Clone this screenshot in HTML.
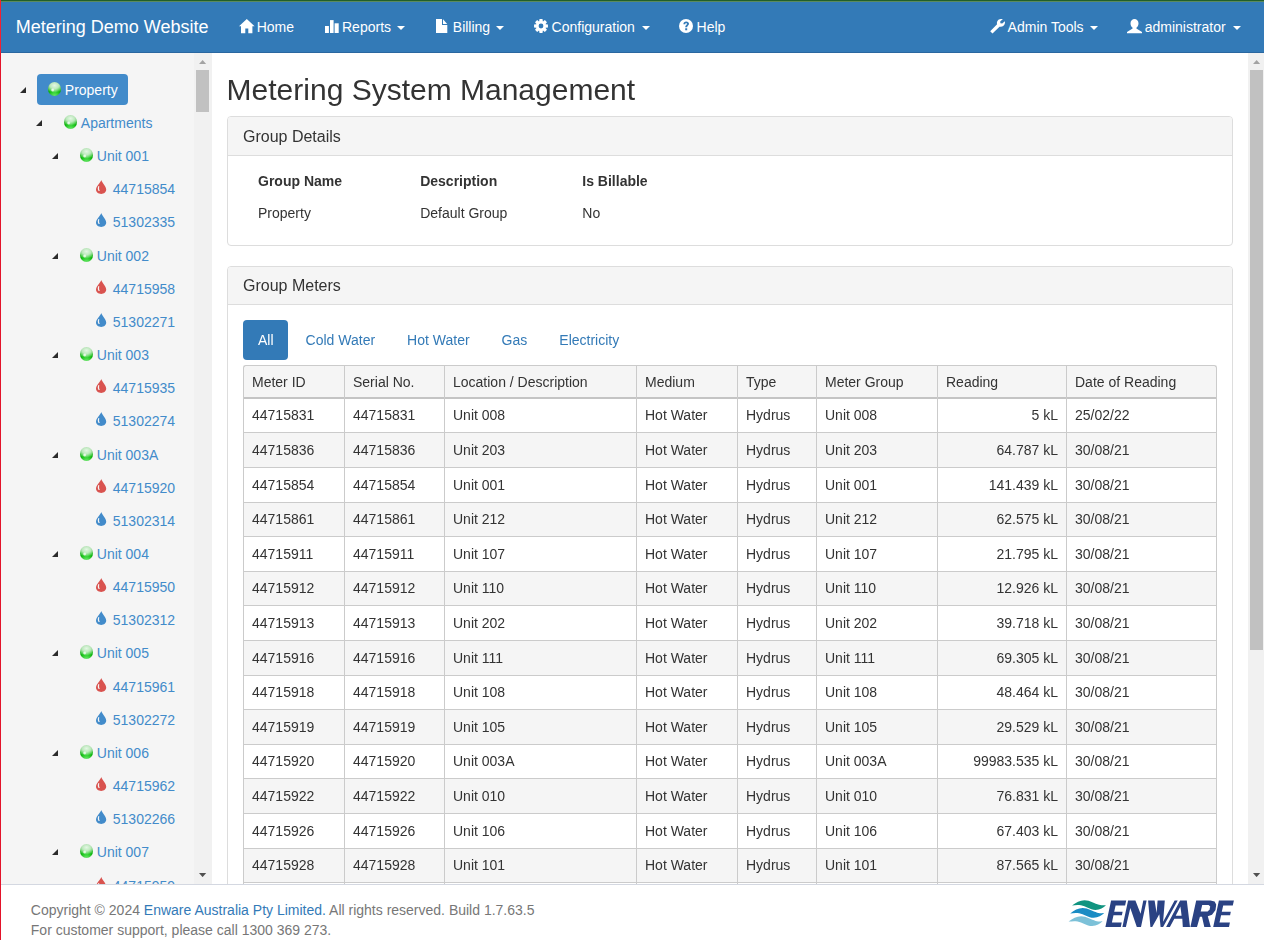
<!DOCTYPE html><html><head><meta charset="utf-8"><title>Metering Demo Website</title><style>

*{box-sizing:border-box;margin:0;padding:0}
html,body{width:1264px;height:940px;overflow:hidden;background:#fff}
body{position:relative;font-family:"Liberation Sans", sans-serif;font-size:14px;line-height:20px;color:#333}
.a{position:absolute;white-space:nowrap}
.nav{position:absolute;left:0;top:0;width:1264px;height:53px;background:#337ab7;border-bottom:1px solid #2a67a0}
.nt{position:absolute;color:#fff;font-size:14px;line-height:20px;top:17px;white-space:nowrap}
.ic{position:absolute;top:18px}
.caret{position:absolute;top:26px;width:0;height:0;border-top:4px solid #fff;border-left:4px solid transparent;border-right:4px solid transparent}
.side{position:absolute;left:0;top:53px;width:212px;height:831px;background:#f5f5f5;overflow:hidden}
.tl{position:absolute;color:#428bca;font-size:14px;line-height:20px;white-space:nowrap}
.tri{position:absolute;width:0;height:0;border-bottom:6px solid #2b2b2b;border-left:6px solid transparent}
.sph{position:absolute;width:13px;height:13.6px;border-radius:50%;background:radial-gradient(circle at 36% 57%,rgba(255,255,255,.95) 0,rgba(255,255,255,.6) 9%,rgba(255,255,255,0) 17%),radial-gradient(ellipse 78% 52% at 50% 24%,rgba(240,250,240,.95) 0,rgba(215,240,215,.85) 45%,rgba(200,235,200,0) 100%),radial-gradient(ellipse 60% 30% at 50% 95%,rgba(110,235,110,.9) 0,rgba(110,235,110,0) 100%),radial-gradient(circle at 50% 55%,#55dd55 0,#12c412 40%,#06a006 75%,#0a820a 100%)}
.drop{position:absolute;width:11px;height:14px}
.sb{position:absolute;background:#f1f1f1}
.thumb{position:absolute;background:#c1c1c1}
.main{position:absolute;left:212px;top:53px;width:1036px;height:831px;overflow:hidden;background:#fff;will-change:transform}
.panel{position:absolute;border:1px solid #ddd;border-radius:4px;background:#fff}
.ph{position:absolute;left:0;top:0;right:0;height:39px;background:#f5f5f5;border-bottom:1px solid #ddd;border-radius:3px 3px 0 0}
.foot{position:absolute;left:0;top:884px;width:1264px;height:56px;background:#fff;border-top:1px solid #d4d8e1}
.td{position:absolute;white-space:nowrap;font-size:14px;line-height:20px;color:#333}

</style></head><body>
<div class="nav">
<div class="a" style="left:0;top:0;width:1264px;height:1px;background:#215f2a"></div>
<div class="a" style="left:0;top:1px;width:1264px;height:1px;background:#5a8a5e"></div>
<div class="nt" style="left:15.8px;top:17px;font-size:18px;line-height:20px">Metering Demo Website</div>
<svg class="a" style="left:238.8px;top:18.7px" width="16" height="15" viewBox="0 0 16 15"><path d="M7.8 0 L15.6 7.2 L13.4 7.2 L13.4 14.3 L9.3 14.3 L9.3 9.5 L6.3 9.5 L6.3 14.3 L2 14.3 L2 7.2 L0 7.2 Z" fill="#fff"/></svg>
<div class="nt" style="left:256.7px">Home</div>
<svg class="a" style="left:325px;top:18.9px" width="14" height="14" viewBox="0 0 14 14"><rect x="0" y="7" width="3.9" height="7" fill="#fff"/><rect x="5" y="1.1" width="3.6" height="12.9" fill="#fff"/><rect x="9.6" y="4.3" width="4.1" height="9.7" fill="#fff"/></svg>
<div class="nt" style="left:342px">Reports</div>
<div class="caret" style="left:397px"></div>
<svg class="a" style="left:435.7px;top:18.9px" width="12" height="15" viewBox="0 0 12 15"><path d="M0 0 L6.0 0 L6.0 5.9 L11.3 5.9 L11.3 14.1 L0 14.1 Z" fill="#fff"/><path d="M7.0 0.2 L11.2 4.9 L7.0 4.9 Z" fill="#fff"/></svg>
<div class="nt" style="left:452.8px">Billing</div>
<div class="caret" style="left:496px"></div>
<svg class="a" style="left:534px;top:18.9px" width="14" height="14" viewBox="0 0 14 14"><path fill-rule="evenodd" fill="#fff" d="M5.52,0.06 L8.48,0.06 L8.85,2.36 L8.97,2.40 L10.86,1.04 L12.96,3.14 L11.59,5.03 L11.64,5.14 L13.94,5.52 L13.94,8.48 L11.64,8.85 L11.60,8.97 L12.96,10.86 L10.86,12.96 L8.97,11.59 L8.86,11.64 L8.48,13.94 L5.52,13.94 L5.15,11.64 L5.03,11.60 L3.14,12.96 L1.04,10.86 L2.41,8.97 L2.36,8.86 L0.06,8.48 L0.06,5.52 L2.36,5.15 L2.40,5.03 L1.04,3.14 L3.14,1.04 L5.03,2.41 L5.14,2.36 Z M9.4,7 A2.4 2.4 0 1 0 4.6,7 A2.4 2.4 0 1 0 9.4,7 Z"/></svg>
<div class="nt" style="left:551.6px">Configuration</div>
<div class="caret" style="left:641.5px"></div>
<svg class="a" style="left:679.1px;top:18.9px" width="14" height="14" viewBox="0 0 14 14"><circle cx="7" cy="7" r="7" fill="#fff"/><path d="M4.4 5.2 C4.4 3.4 5.6 2.4 7.2 2.4 C8.9 2.4 10 3.4 10 4.8 C10 6.3 8.2 6.8 8.2 8.2 L6.2 8.2 C6.2 6.3 7.9 5.8 7.9 4.9 C7.9 4.4 7.6 4.1 7.1 4.1 C6.6 4.1 6.3 4.5 6.3 5.2 Z M6.2 9.2 L8.2 9.2 L8.2 11.2 L6.2 11.2 Z" fill="#337ab7"/></svg>
<div class="nt" style="left:696.6px">Help</div>
<svg class="a" style="left:990px;top:18.7px" width="15" height="15" viewBox="0 0 15 15"><path d="M0.2 12.3 L7.1 5.3 C6.6 3.9 7.0 2.1 8.2 1.0 C9.3 0.1 11.0 -0.1 12.9 0.1 L10.2 2.6 L10.4 4.3 L12.2 4.6 L14.9 2.3 C15.2 4.0 14.7 5.7 13.5 6.8 C12.4 7.8 10.8 8.1 9.5 7.7 L2.5 14.6 Z" fill="#fff"/></svg>
<div class="nt" style="left:1007.6px">Admin Tools</div>
<div class="caret" style="left:1089.5px"></div>
<svg class="a" style="left:1127px;top:18.7px" width="15" height="15" viewBox="0 0 15 15"><path d="M7.5 0 C9.6 0 11.5 1.6 11.5 4.3 C11.5 6.4 10.6 8 9.4 8.8 L9.4 9.4 L15 13 L15 14.3 L0 14.3 L0 13 L5.6 9.4 L5.6 8.8 C4.4 8 3.5 6.4 3.5 4.3 C3.5 1.6 5.4 0 7.5 0 Z" fill="#fff"/></svg>
<div class="nt" style="left:1144.7px">administrator</div>
<div class="caret" style="left:1232.5px"></div>
</div>
<div class="side">
<div class="a" style="left:37px;top:21px;width:91px;height:31px;background:#428bca;border-radius:4px"></div>
<div class="tri" style="left:20px;top:34px"></div>
<div class="sph" style="left:47.6px;top:29.2px"></div>
<div class="tl" style="left:64.8px;top:27px;color:#fff">Property</div>
<div class="tri" style="left:36px;top:67px"></div>
<div class="sph" style="left:63.6px;top:62.2px"></div>
<div class="tl" style="left:80.8px;top:60px;color:#428bca">Apartments</div>
<div class="tri" style="left:52px;top:100px"></div>
<div class="sph" style="left:79.6px;top:95.2px"></div>
<div class="tl" style="left:96.8px;top:93px;color:#428bca">Unit 001</div>
<div class="a" style="left:95.9px;top:127.3px;width:11px;height:14px"><svg class="drop" viewBox="0 0 11 14" width="11" height="14"><path d="M5.3 0 C5.8 2.3 10.2 6.2 10.2 9.6 C10.2 12.2 8.0 14 5.2 14 C2.3 14 0 12.2 0 9.6 C0 6.2 4.7 2.3 5.3 0 Z" fill="#d9534f"/><path d="M2.4 6.0 C1.6 7.5 1.5 9.5 2.6 11.0 C3.0 11.1 3.5 11.0 3.8 10.8 C3.0 9.8 2.9 7.6 3.3 6.2 Z" fill="#f5f5f5"/></svg></div>
<div class="tl" style="left:112.8px;top:126px;color:#428bca">44715854</div>
<div class="a" style="left:95.9px;top:160.3px;width:11px;height:14px"><svg class="drop" viewBox="0 0 11 14" width="11" height="14"><path d="M5.3 0 C5.8 2.3 10.2 6.2 10.2 9.6 C10.2 12.2 8.0 14 5.2 14 C2.3 14 0 12.2 0 9.6 C0 6.2 4.7 2.3 5.3 0 Z" fill="#428bca"/><path d="M2.4 6.0 C1.6 7.5 1.5 9.5 2.6 11.0 C3.0 11.1 3.5 11.0 3.8 10.8 C3.0 9.8 2.9 7.6 3.3 6.2 Z" fill="#f5f5f5"/></svg></div>
<div class="tl" style="left:112.8px;top:159px;color:#428bca">51302335</div>
<div class="tri" style="left:52px;top:200px"></div>
<div class="sph" style="left:79.6px;top:195.2px"></div>
<div class="tl" style="left:96.8px;top:193px;color:#428bca">Unit 002</div>
<div class="a" style="left:95.9px;top:227.3px;width:11px;height:14px"><svg class="drop" viewBox="0 0 11 14" width="11" height="14"><path d="M5.3 0 C5.8 2.3 10.2 6.2 10.2 9.6 C10.2 12.2 8.0 14 5.2 14 C2.3 14 0 12.2 0 9.6 C0 6.2 4.7 2.3 5.3 0 Z" fill="#d9534f"/><path d="M2.4 6.0 C1.6 7.5 1.5 9.5 2.6 11.0 C3.0 11.1 3.5 11.0 3.8 10.8 C3.0 9.8 2.9 7.6 3.3 6.2 Z" fill="#f5f5f5"/></svg></div>
<div class="tl" style="left:112.8px;top:226px;color:#428bca">44715958</div>
<div class="a" style="left:95.9px;top:260.3px;width:11px;height:14px"><svg class="drop" viewBox="0 0 11 14" width="11" height="14"><path d="M5.3 0 C5.8 2.3 10.2 6.2 10.2 9.6 C10.2 12.2 8.0 14 5.2 14 C2.3 14 0 12.2 0 9.6 C0 6.2 4.7 2.3 5.3 0 Z" fill="#428bca"/><path d="M2.4 6.0 C1.6 7.5 1.5 9.5 2.6 11.0 C3.0 11.1 3.5 11.0 3.8 10.8 C3.0 9.8 2.9 7.6 3.3 6.2 Z" fill="#f5f5f5"/></svg></div>
<div class="tl" style="left:112.8px;top:259px;color:#428bca">51302271</div>
<div class="tri" style="left:52px;top:299px"></div>
<div class="sph" style="left:79.6px;top:294.2px"></div>
<div class="tl" style="left:96.8px;top:292px;color:#428bca">Unit 003</div>
<div class="a" style="left:95.9px;top:326.3px;width:11px;height:14px"><svg class="drop" viewBox="0 0 11 14" width="11" height="14"><path d="M5.3 0 C5.8 2.3 10.2 6.2 10.2 9.6 C10.2 12.2 8.0 14 5.2 14 C2.3 14 0 12.2 0 9.6 C0 6.2 4.7 2.3 5.3 0 Z" fill="#d9534f"/><path d="M2.4 6.0 C1.6 7.5 1.5 9.5 2.6 11.0 C3.0 11.1 3.5 11.0 3.8 10.8 C3.0 9.8 2.9 7.6 3.3 6.2 Z" fill="#f5f5f5"/></svg></div>
<div class="tl" style="left:112.8px;top:325px;color:#428bca">44715935</div>
<div class="a" style="left:95.9px;top:359.3px;width:11px;height:14px"><svg class="drop" viewBox="0 0 11 14" width="11" height="14"><path d="M5.3 0 C5.8 2.3 10.2 6.2 10.2 9.6 C10.2 12.2 8.0 14 5.2 14 C2.3 14 0 12.2 0 9.6 C0 6.2 4.7 2.3 5.3 0 Z" fill="#428bca"/><path d="M2.4 6.0 C1.6 7.5 1.5 9.5 2.6 11.0 C3.0 11.1 3.5 11.0 3.8 10.8 C3.0 9.8 2.9 7.6 3.3 6.2 Z" fill="#f5f5f5"/></svg></div>
<div class="tl" style="left:112.8px;top:358px;color:#428bca">51302274</div>
<div class="tri" style="left:52px;top:399px"></div>
<div class="sph" style="left:79.6px;top:394.2px"></div>
<div class="tl" style="left:96.8px;top:392px;color:#428bca">Unit 003A</div>
<div class="a" style="left:95.9px;top:426.3px;width:11px;height:14px"><svg class="drop" viewBox="0 0 11 14" width="11" height="14"><path d="M5.3 0 C5.8 2.3 10.2 6.2 10.2 9.6 C10.2 12.2 8.0 14 5.2 14 C2.3 14 0 12.2 0 9.6 C0 6.2 4.7 2.3 5.3 0 Z" fill="#d9534f"/><path d="M2.4 6.0 C1.6 7.5 1.5 9.5 2.6 11.0 C3.0 11.1 3.5 11.0 3.8 10.8 C3.0 9.8 2.9 7.6 3.3 6.2 Z" fill="#f5f5f5"/></svg></div>
<div class="tl" style="left:112.8px;top:425px;color:#428bca">44715920</div>
<div class="a" style="left:95.9px;top:459.3px;width:11px;height:14px"><svg class="drop" viewBox="0 0 11 14" width="11" height="14"><path d="M5.3 0 C5.8 2.3 10.2 6.2 10.2 9.6 C10.2 12.2 8.0 14 5.2 14 C2.3 14 0 12.2 0 9.6 C0 6.2 4.7 2.3 5.3 0 Z" fill="#428bca"/><path d="M2.4 6.0 C1.6 7.5 1.5 9.5 2.6 11.0 C3.0 11.1 3.5 11.0 3.8 10.8 C3.0 9.8 2.9 7.6 3.3 6.2 Z" fill="#f5f5f5"/></svg></div>
<div class="tl" style="left:112.8px;top:458px;color:#428bca">51302314</div>
<div class="tri" style="left:52px;top:498px"></div>
<div class="sph" style="left:79.6px;top:493.2px"></div>
<div class="tl" style="left:96.8px;top:491px;color:#428bca">Unit 004</div>
<div class="a" style="left:95.9px;top:525.3px;width:11px;height:14px"><svg class="drop" viewBox="0 0 11 14" width="11" height="14"><path d="M5.3 0 C5.8 2.3 10.2 6.2 10.2 9.6 C10.2 12.2 8.0 14 5.2 14 C2.3 14 0 12.2 0 9.6 C0 6.2 4.7 2.3 5.3 0 Z" fill="#d9534f"/><path d="M2.4 6.0 C1.6 7.5 1.5 9.5 2.6 11.0 C3.0 11.1 3.5 11.0 3.8 10.8 C3.0 9.8 2.9 7.6 3.3 6.2 Z" fill="#f5f5f5"/></svg></div>
<div class="tl" style="left:112.8px;top:524px;color:#428bca">44715950</div>
<div class="a" style="left:95.9px;top:558.3px;width:11px;height:14px"><svg class="drop" viewBox="0 0 11 14" width="11" height="14"><path d="M5.3 0 C5.8 2.3 10.2 6.2 10.2 9.6 C10.2 12.2 8.0 14 5.2 14 C2.3 14 0 12.2 0 9.6 C0 6.2 4.7 2.3 5.3 0 Z" fill="#428bca"/><path d="M2.4 6.0 C1.6 7.5 1.5 9.5 2.6 11.0 C3.0 11.1 3.5 11.0 3.8 10.8 C3.0 9.8 2.9 7.6 3.3 6.2 Z" fill="#f5f5f5"/></svg></div>
<div class="tl" style="left:112.8px;top:557px;color:#428bca">51302312</div>
<div class="tri" style="left:52px;top:597px"></div>
<div class="sph" style="left:79.6px;top:592.2px"></div>
<div class="tl" style="left:96.8px;top:590px;color:#428bca">Unit 005</div>
<div class="a" style="left:95.9px;top:625.3px;width:11px;height:14px"><svg class="drop" viewBox="0 0 11 14" width="11" height="14"><path d="M5.3 0 C5.8 2.3 10.2 6.2 10.2 9.6 C10.2 12.2 8.0 14 5.2 14 C2.3 14 0 12.2 0 9.6 C0 6.2 4.7 2.3 5.3 0 Z" fill="#d9534f"/><path d="M2.4 6.0 C1.6 7.5 1.5 9.5 2.6 11.0 C3.0 11.1 3.5 11.0 3.8 10.8 C3.0 9.8 2.9 7.6 3.3 6.2 Z" fill="#f5f5f5"/></svg></div>
<div class="tl" style="left:112.8px;top:624px;color:#428bca">44715961</div>
<div class="a" style="left:95.9px;top:658.3px;width:11px;height:14px"><svg class="drop" viewBox="0 0 11 14" width="11" height="14"><path d="M5.3 0 C5.8 2.3 10.2 6.2 10.2 9.6 C10.2 12.2 8.0 14 5.2 14 C2.3 14 0 12.2 0 9.6 C0 6.2 4.7 2.3 5.3 0 Z" fill="#428bca"/><path d="M2.4 6.0 C1.6 7.5 1.5 9.5 2.6 11.0 C3.0 11.1 3.5 11.0 3.8 10.8 C3.0 9.8 2.9 7.6 3.3 6.2 Z" fill="#f5f5f5"/></svg></div>
<div class="tl" style="left:112.8px;top:657px;color:#428bca">51302272</div>
<div class="tri" style="left:52px;top:697px"></div>
<div class="sph" style="left:79.6px;top:692.2px"></div>
<div class="tl" style="left:96.8px;top:690px;color:#428bca">Unit 006</div>
<div class="a" style="left:95.9px;top:724.3px;width:11px;height:14px"><svg class="drop" viewBox="0 0 11 14" width="11" height="14"><path d="M5.3 0 C5.8 2.3 10.2 6.2 10.2 9.6 C10.2 12.2 8.0 14 5.2 14 C2.3 14 0 12.2 0 9.6 C0 6.2 4.7 2.3 5.3 0 Z" fill="#d9534f"/><path d="M2.4 6.0 C1.6 7.5 1.5 9.5 2.6 11.0 C3.0 11.1 3.5 11.0 3.8 10.8 C3.0 9.8 2.9 7.6 3.3 6.2 Z" fill="#f5f5f5"/></svg></div>
<div class="tl" style="left:112.8px;top:723px;color:#428bca">44715962</div>
<div class="a" style="left:95.9px;top:757.3px;width:11px;height:14px"><svg class="drop" viewBox="0 0 11 14" width="11" height="14"><path d="M5.3 0 C5.8 2.3 10.2 6.2 10.2 9.6 C10.2 12.2 8.0 14 5.2 14 C2.3 14 0 12.2 0 9.6 C0 6.2 4.7 2.3 5.3 0 Z" fill="#428bca"/><path d="M2.4 6.0 C1.6 7.5 1.5 9.5 2.6 11.0 C3.0 11.1 3.5 11.0 3.8 10.8 C3.0 9.8 2.9 7.6 3.3 6.2 Z" fill="#f5f5f5"/></svg></div>
<div class="tl" style="left:112.8px;top:756px;color:#428bca">51302266</div>
<div class="tri" style="left:52px;top:796px"></div>
<div class="sph" style="left:79.6px;top:791.2px"></div>
<div class="tl" style="left:96.8px;top:789px;color:#428bca">Unit 007</div>
<div class="a" style="left:95.9px;top:824.3px;width:11px;height:14px"><svg class="drop" viewBox="0 0 11 14" width="11" height="14"><path d="M5.3 0 C5.8 2.3 10.2 6.2 10.2 9.6 C10.2 12.2 8.0 14 5.2 14 C2.3 14 0 12.2 0 9.6 C0 6.2 4.7 2.3 5.3 0 Z" fill="#d9534f"/><path d="M2.4 6.0 C1.6 7.5 1.5 9.5 2.6 11.0 C3.0 11.1 3.5 11.0 3.8 10.8 C3.0 9.8 2.9 7.6 3.3 6.2 Z" fill="#f5f5f5"/></svg></div>
<div class="tl" style="left:112.8px;top:823px;color:#428bca">44715959</div>
<div class="a" style="left:95.9px;top:857.3px;width:11px;height:14px"><svg class="drop" viewBox="0 0 11 14" width="11" height="14"><path d="M5.3 0 C5.8 2.3 10.2 6.2 10.2 9.6 C10.2 12.2 8.0 14 5.2 14 C2.3 14 0 12.2 0 9.6 C0 6.2 4.7 2.3 5.3 0 Z" fill="#428bca"/><path d="M2.4 6.0 C1.6 7.5 1.5 9.5 2.6 11.0 C3.0 11.1 3.5 11.0 3.8 10.8 C3.0 9.8 2.9 7.6 3.3 6.2 Z" fill="#f5f5f5"/></svg></div>
<div class="tl" style="left:112.8px;top:856px;color:#428bca">51302270</div>
<div class="sb" style="left:194px;top:0;width:18px;height:831px"></div>
<div class="thumb" style="left:196px;top:17px;width:13px;height:42px"></div>
<svg class="a" style="left:198.9px;top:6.9px" width="8" height="4.2" viewBox="0 0 8 4.2"><path d="M0 4.1 L3.6 0 L7.2 4.1 Z" fill="#a3a3a3"/></svg>
<svg class="a" style="left:198.9px;top:820px" width="8" height="4.2" viewBox="0 0 8 4.2"><path d="M0 0 L7.2 0 L3.6 4.1 Z" fill="#505050"/></svg>
</div>
<div class="main">
<div class="a" style="left:14.599999999999994px;top:19.9px;font-size:30px;line-height:33px;color:#333">Metering System Management</div>
<div class="panel" style="left:15px;top:63px;width:1006px;height:130px">
<div class="ph"></div>
<div class="a" style="left:15px;top:11px;font-size:16px;line-height:18px;color:#333">Group Details</div>
<div class="a" style="left:30px;top:54.3px;font-weight:bold">Group Name</div>
<div class="a" style="left:30px;top:85.7px">Property</div>
<div class="a" style="left:192.2px;top:54.3px;font-weight:bold">Description</div>
<div class="a" style="left:192.2px;top:85.7px">Default Group</div>
<div class="a" style="left:354.29999999999995px;top:54.3px;font-weight:bold">Is Billable</div>
<div class="a" style="left:354.29999999999995px;top:85.7px">No</div>
</div>
<div class="panel" style="left:15px;top:213px;width:1006px;height:700px">
<div class="ph" style="height:38px"></div>
<div class="a" style="left:15px;top:10px;font-size:16px;line-height:18px;color:#333">Group Meters</div>
</div>
<div class="a" style="left:31px;top:267px;width:44.8px;height:40px;background:#337ab7;border-radius:4px"></div>
<div class="a" style="left:46px;top:277px;color:#fff">All</div>
<div class="a" style="left:93.60000000000002px;top:277px;color:#337ab7">Cold Water</div>
<div class="a" style="left:195.10000000000002px;top:277px;color:#337ab7">Hot Water</div>
<div class="a" style="left:289.6px;top:277px;color:#337ab7">Gas</div>
<div class="a" style="left:347.29999999999995px;top:277px;color:#337ab7">Electricity</div>
<div class="a" style="left:31px;top:312px;width:974px;height:34px;background:#f5f5f5;border-radius:3px 3px 0 0"></div>
<div class="a" style="left:31px;top:380px;width:974px;height:34px;background:#f5f5f5"></div>
<div class="a" style="left:31px;top:450px;width:974px;height:33px;background:#f5f5f5"></div>
<div class="a" style="left:31px;top:519px;width:974px;height:33px;background:#f5f5f5"></div>
<div class="a" style="left:31px;top:588px;width:974px;height:34px;background:#f5f5f5"></div>
<div class="a" style="left:31px;top:657px;width:974px;height:34px;background:#f5f5f5"></div>
<div class="a" style="left:31px;top:726px;width:974px;height:34px;background:#f5f5f5"></div>
<div class="a" style="left:31px;top:796px;width:974px;height:33px;background:#f5f5f5"></div>
<div class="a" style="left:34px;top:312px;width:968px;height:1px;background:#cbcbcb"></div>
<div class="a" style="left:31px;top:344px;width:974px;height:2px;background:#c4c4c4"></div>
<div class="a" style="left:31px;top:379px;width:974px;height:1px;background:#cbcbcb"></div>
<div class="a" style="left:31px;top:414px;width:974px;height:1px;background:#cbcbcb"></div>
<div class="a" style="left:31px;top:449px;width:974px;height:1px;background:#cbcbcb"></div>
<div class="a" style="left:31px;top:483px;width:974px;height:1px;background:#cbcbcb"></div>
<div class="a" style="left:31px;top:518px;width:974px;height:1px;background:#cbcbcb"></div>
<div class="a" style="left:31px;top:552px;width:974px;height:1px;background:#cbcbcb"></div>
<div class="a" style="left:31px;top:587px;width:974px;height:1px;background:#cbcbcb"></div>
<div class="a" style="left:31px;top:622px;width:974px;height:1px;background:#cbcbcb"></div>
<div class="a" style="left:31px;top:656px;width:974px;height:1px;background:#cbcbcb"></div>
<div class="a" style="left:31px;top:691px;width:974px;height:1px;background:#cbcbcb"></div>
<div class="a" style="left:31px;top:725px;width:974px;height:1px;background:#cbcbcb"></div>
<div class="a" style="left:31px;top:760px;width:974px;height:1px;background:#cbcbcb"></div>
<div class="a" style="left:31px;top:795px;width:974px;height:1px;background:#cbcbcb"></div>
<div class="a" style="left:31px;top:829px;width:974px;height:1px;background:#cbcbcb"></div>
<div class="a" style="left:31px;top:864px;width:974px;height:1px;background:#cbcbcb"></div>
<div class="a" style="left:31px;top:315px;width:1px;height:532px;background:#cbcbcb"></div>
<div class="a" style="left:132px;top:313px;width:1px;height:534px;background:#cbcbcb"></div>
<div class="a" style="left:232px;top:313px;width:1px;height:534px;background:#cbcbcb"></div>
<div class="a" style="left:424px;top:313px;width:1px;height:534px;background:#cbcbcb"></div>
<div class="a" style="left:525px;top:313px;width:1px;height:534px;background:#cbcbcb"></div>
<div class="a" style="left:604px;top:313px;width:1px;height:534px;background:#cbcbcb"></div>
<div class="a" style="left:725px;top:313px;width:1px;height:534px;background:#cbcbcb"></div>
<div class="a" style="left:854px;top:313px;width:1px;height:534px;background:#cbcbcb"></div>
<div class="a" style="left:1004px;top:315px;width:1px;height:532px;background:#cbcbcb"></div>
<div class="a" style="left:31px;top:312px;width:8px;height:8px;border-left:1px solid #cbcbcb;border-top:1px solid #cbcbcb;border-radius:3px 0 0 0"></div>
<div class="a" style="left:997px;top:312px;width:8px;height:8px;border-right:1px solid #cbcbcb;border-top:1px solid #cbcbcb;border-radius:0 3px 0 0"></div>
<div class="td" style="left:40px;top:319.1px">Meter ID</div>
<div class="td" style="left:141px;top:319.1px">Serial No.</div>
<div class="td" style="left:241px;top:319.1px">Location / Description</div>
<div class="td" style="left:433px;top:319.1px">Medium</div>
<div class="td" style="left:534px;top:319.1px">Type</div>
<div class="td" style="left:613px;top:319.1px">Meter Group</div>
<div class="td" style="left:734px;top:319.1px">Reading</div>
<div class="td" style="left:863px;top:319.1px">Date of Reading</div>
<div class="td" style="left:40px;top:352.1px">44715831</div>
<div class="td" style="left:141px;top:352.1px">44715831</div>
<div class="td" style="left:241px;top:352.1px">Unit 008</div>
<div class="td" style="left:433px;top:352.1px">Hot Water</div>
<div class="td" style="left:534px;top:352.1px">Hydrus</div>
<div class="td" style="left:613px;top:352.1px">Unit 008</div>
<div class="td" style="left:863px;top:352.1px">25/02/22</div>
<div class="td" style="left:725px;width:121px;text-align:right;top:352.1px">5 kL</div>
<div class="td" style="left:40px;top:387.1px">44715836</div>
<div class="td" style="left:141px;top:387.1px">44715836</div>
<div class="td" style="left:241px;top:387.1px">Unit 203</div>
<div class="td" style="left:433px;top:387.1px">Hot Water</div>
<div class="td" style="left:534px;top:387.1px">Hydrus</div>
<div class="td" style="left:613px;top:387.1px">Unit 203</div>
<div class="td" style="left:863px;top:387.1px">30/08/21</div>
<div class="td" style="left:725px;width:121px;text-align:right;top:387.1px">64.787 kL</div>
<div class="td" style="left:40px;top:422.1px">44715854</div>
<div class="td" style="left:141px;top:422.1px">44715854</div>
<div class="td" style="left:241px;top:422.1px">Unit 001</div>
<div class="td" style="left:433px;top:422.1px">Hot Water</div>
<div class="td" style="left:534px;top:422.1px">Hydrus</div>
<div class="td" style="left:613px;top:422.1px">Unit 001</div>
<div class="td" style="left:863px;top:422.1px">30/08/21</div>
<div class="td" style="left:725px;width:121px;text-align:right;top:422.1px">141.439 kL</div>
<div class="td" style="left:40px;top:456.1px">44715861</div>
<div class="td" style="left:141px;top:456.1px">44715861</div>
<div class="td" style="left:241px;top:456.1px">Unit 212</div>
<div class="td" style="left:433px;top:456.1px">Hot Water</div>
<div class="td" style="left:534px;top:456.1px">Hydrus</div>
<div class="td" style="left:613px;top:456.1px">Unit 212</div>
<div class="td" style="left:863px;top:456.1px">30/08/21</div>
<div class="td" style="left:725px;width:121px;text-align:right;top:456.1px">62.575 kL</div>
<div class="td" style="left:40px;top:491.1px">44715911</div>
<div class="td" style="left:141px;top:491.1px">44715911</div>
<div class="td" style="left:241px;top:491.1px">Unit 107</div>
<div class="td" style="left:433px;top:491.1px">Hot Water</div>
<div class="td" style="left:534px;top:491.1px">Hydrus</div>
<div class="td" style="left:613px;top:491.1px">Unit 107</div>
<div class="td" style="left:863px;top:491.1px">30/08/21</div>
<div class="td" style="left:725px;width:121px;text-align:right;top:491.1px">21.795 kL</div>
<div class="td" style="left:40px;top:525.1px">44715912</div>
<div class="td" style="left:141px;top:525.1px">44715912</div>
<div class="td" style="left:241px;top:525.1px">Unit 110</div>
<div class="td" style="left:433px;top:525.1px">Hot Water</div>
<div class="td" style="left:534px;top:525.1px">Hydrus</div>
<div class="td" style="left:613px;top:525.1px">Unit 110</div>
<div class="td" style="left:863px;top:525.1px">30/08/21</div>
<div class="td" style="left:725px;width:121px;text-align:right;top:525.1px">12.926 kL</div>
<div class="td" style="left:40px;top:560.1px">44715913</div>
<div class="td" style="left:141px;top:560.1px">44715913</div>
<div class="td" style="left:241px;top:560.1px">Unit 202</div>
<div class="td" style="left:433px;top:560.1px">Hot Water</div>
<div class="td" style="left:534px;top:560.1px">Hydrus</div>
<div class="td" style="left:613px;top:560.1px">Unit 202</div>
<div class="td" style="left:863px;top:560.1px">30/08/21</div>
<div class="td" style="left:725px;width:121px;text-align:right;top:560.1px">39.718 kL</div>
<div class="td" style="left:40px;top:595.1px">44715916</div>
<div class="td" style="left:141px;top:595.1px">44715916</div>
<div class="td" style="left:241px;top:595.1px">Unit 111</div>
<div class="td" style="left:433px;top:595.1px">Hot Water</div>
<div class="td" style="left:534px;top:595.1px">Hydrus</div>
<div class="td" style="left:613px;top:595.1px">Unit 111</div>
<div class="td" style="left:863px;top:595.1px">30/08/21</div>
<div class="td" style="left:725px;width:121px;text-align:right;top:595.1px">69.305 kL</div>
<div class="td" style="left:40px;top:629.1px">44715918</div>
<div class="td" style="left:141px;top:629.1px">44715918</div>
<div class="td" style="left:241px;top:629.1px">Unit 108</div>
<div class="td" style="left:433px;top:629.1px">Hot Water</div>
<div class="td" style="left:534px;top:629.1px">Hydrus</div>
<div class="td" style="left:613px;top:629.1px">Unit 108</div>
<div class="td" style="left:863px;top:629.1px">30/08/21</div>
<div class="td" style="left:725px;width:121px;text-align:right;top:629.1px">48.464 kL</div>
<div class="td" style="left:40px;top:664.1px">44715919</div>
<div class="td" style="left:141px;top:664.1px">44715919</div>
<div class="td" style="left:241px;top:664.1px">Unit 105</div>
<div class="td" style="left:433px;top:664.1px">Hot Water</div>
<div class="td" style="left:534px;top:664.1px">Hydrus</div>
<div class="td" style="left:613px;top:664.1px">Unit 105</div>
<div class="td" style="left:863px;top:664.1px">30/08/21</div>
<div class="td" style="left:725px;width:121px;text-align:right;top:664.1px">29.529 kL</div>
<div class="td" style="left:40px;top:698.1px">44715920</div>
<div class="td" style="left:141px;top:698.1px">44715920</div>
<div class="td" style="left:241px;top:698.1px">Unit 003A</div>
<div class="td" style="left:433px;top:698.1px">Hot Water</div>
<div class="td" style="left:534px;top:698.1px">Hydrus</div>
<div class="td" style="left:613px;top:698.1px">Unit 003A</div>
<div class="td" style="left:863px;top:698.1px">30/08/21</div>
<div class="td" style="left:725px;width:121px;text-align:right;top:698.1px">99983.535 kL</div>
<div class="td" style="left:40px;top:733.1px">44715922</div>
<div class="td" style="left:141px;top:733.1px">44715922</div>
<div class="td" style="left:241px;top:733.1px">Unit 010</div>
<div class="td" style="left:433px;top:733.1px">Hot Water</div>
<div class="td" style="left:534px;top:733.1px">Hydrus</div>
<div class="td" style="left:613px;top:733.1px">Unit 010</div>
<div class="td" style="left:863px;top:733.1px">30/08/21</div>
<div class="td" style="left:725px;width:121px;text-align:right;top:733.1px">76.831 kL</div>
<div class="td" style="left:40px;top:768.1px">44715926</div>
<div class="td" style="left:141px;top:768.1px">44715926</div>
<div class="td" style="left:241px;top:768.1px">Unit 106</div>
<div class="td" style="left:433px;top:768.1px">Hot Water</div>
<div class="td" style="left:534px;top:768.1px">Hydrus</div>
<div class="td" style="left:613px;top:768.1px">Unit 106</div>
<div class="td" style="left:863px;top:768.1px">30/08/21</div>
<div class="td" style="left:725px;width:121px;text-align:right;top:768.1px">67.403 kL</div>
<div class="td" style="left:40px;top:802.1px">44715928</div>
<div class="td" style="left:141px;top:802.1px">44715928</div>
<div class="td" style="left:241px;top:802.1px">Unit 101</div>
<div class="td" style="left:433px;top:802.1px">Hot Water</div>
<div class="td" style="left:534px;top:802.1px">Hydrus</div>
<div class="td" style="left:613px;top:802.1px">Unit 101</div>
<div class="td" style="left:863px;top:802.1px">30/08/21</div>
<div class="td" style="left:725px;width:121px;text-align:right;top:802.1px">87.565 kL</div>
<div class="td" style="left:40px;top:837.1px">44715950</div>
<div class="td" style="left:141px;top:837.1px">44715950</div>
<div class="td" style="left:241px;top:837.1px">Unit 004</div>
<div class="td" style="left:433px;top:837.1px">Hot Water</div>
<div class="td" style="left:534px;top:837.1px">Hydrus</div>
<div class="td" style="left:613px;top:837.1px">Unit 004</div>
<div class="td" style="left:863px;top:837.1px">30/08/21</div>
<div class="td" style="left:725px;width:121px;text-align:right;top:837.1px">12.345 kL</div>
<div class="sb" style="left:1036px;top:0;width:16px;height:831px"></div>
</div>
<div class="sb" style="left:1248px;top:53px;width:16px;height:831px"></div>
<div class="thumb" style="left:1250px;top:70px;width:13px;height:580px"></div>
<svg class="a" style="left:1252.9px;top:59.8px" width="8" height="4.2" viewBox="0 0 8 4.2"><path d="M0 4.1 L3.6 0 L7.2 4.1 Z" fill="#a3a3a3"/></svg>
<svg class="a" style="left:1252.9px;top:872.9px" width="8" height="4.2" viewBox="0 0 8 4.2"><path d="M0 0 L7.2 0 L3.6 4.1 Z" fill="#505050"/></svg>
<div class="foot">
<div class="a" style="left:30.8px;top:15px;color:#777">Copyright © 2024 <span style="color:#337ab7">Enware Australia Pty Limited.</span> All rights reserved. Build 1.7.63.5</div>
<div class="a" style="left:30.8px;top:35px;color:#777">For customer support, please call 1300 369 273.</div>
</div>
<svg class="a" style="left:1064px;top:894px" width="176" height="40" viewBox="0 0 176 40">
<path transform="translate(0,0)" fill="#119480" d="M8,11.5 C12,8.5 16,6.2 20.5,6.2 C26,6.2 31,9.8 35,10.8 C38,11.5 40.5,11.4 42,11.2 C39.5,13.8 36,15.9 31.5,15.9 C26,15.9 21.5,12 17,11.3 C13.5,10.8 10.5,11.2 8,11.5 Z"/><path transform="translate(-1.8,7.9)" fill="#1a8cc4" d="M8,11.5 C12,8.5 16,6.2 20.5,6.2 C26,6.2 31,9.8 35,10.8 C38,11.5 40.5,11.4 42,11.2 C39.5,13.8 36,15.9 31.5,15.9 C26,15.9 21.5,12 17,11.3 C13.5,10.8 10.5,11.2 8,11.5 Z"/><path transform="translate(-3.4,16.1)" fill="#7cc1d8" d="M8,11.5 C12,8.5 16,6.2 20.5,6.2 C26,6.2 31,9.8 35,10.8 C38,11.5 40.5,11.4 42,11.2 C39.5,13.8 36,15.9 31.5,15.9 C26,15.9 21.5,12 17,11.3 C13.5,10.8 10.5,11.2 8,11.5 Z"/>
<path fill="#2a4283" d="M41.4,33.0 L56.8,33.0 L57.7,28.6 L47.9,28.6 L49.5,21.3 L57.9,21.3 L58.6,17.8 L50.2,17.8 L51.6,11.4 L61.1,11.4 L62.2,6.4 L47.1,6.4 Z"/>
<path fill="#2a4283" d="M58.4,33.0 L64.1,6.4 L71.4,6.4 L76.6,19.8 L79.3,6.4 L82.6,6.4 L77.0,33.0 L72.8,33.0 L66.3,13.9 L61.9,33.0 Z"/><path fill="#2a4283" d="M84.1,6.4 L90.6,6.4 L92.6,19.0 L93.6,6.4 L100.8,6.4 L99.1,27.8 L110.6,6.4 L113.7,6.4 L99.1,33.0 L96.6,33.0 L95.3,20.3 L88.2,33.0 L86.4,33.0 Z"/><path fill="#2a4283" d="M102.1,33.0 L116.1,6.4 L122.8,6.4 L126.0,33.0 L118.8,33.0 L118.3,24.8 L110.3,24.8 L105.9,33.0 Z"/><path fill="#fff" d="M116.4,12.5 L117.6,21.7 L111.7,21.7 Z"/><path fill="#2a4283" d="M126.4,33.0 L132.2,6.4 L146.5,6.4 L150.6,7.5 L152.2,10.5 L151.5,16.0 L148.0,20.8 L143.8,22.2 L146.8,33.0 L140.3,33.0 L138.0,22.8 L135.9,22.8 L133.0,33.0 Z"/><path fill="#fff" d="M136.7,17.4 L138.2,10.9 L144.6,10.9 L146.2,12.5 L145.6,15.6 L143.6,17.4 Z"/>
<path fill="#2a4283" d="M149.2,33.0 L165.0,33.0 L165.9,28.6 L155.5,28.6 L157.1,21.3 L166.1,21.3 L166.8,17.8 L157.8,17.8 L159.2,11.4 L168.8,11.4 L169.9,6.4 L154.9,6.4 Z"/>
</svg>
<div class="a" style="left:0;top:0;width:1px;height:53px;background:#f52030"></div>
<div class="a" style="left:0;top:53px;width:1px;height:887px;background:#e3132a"></div>
</body></html>
